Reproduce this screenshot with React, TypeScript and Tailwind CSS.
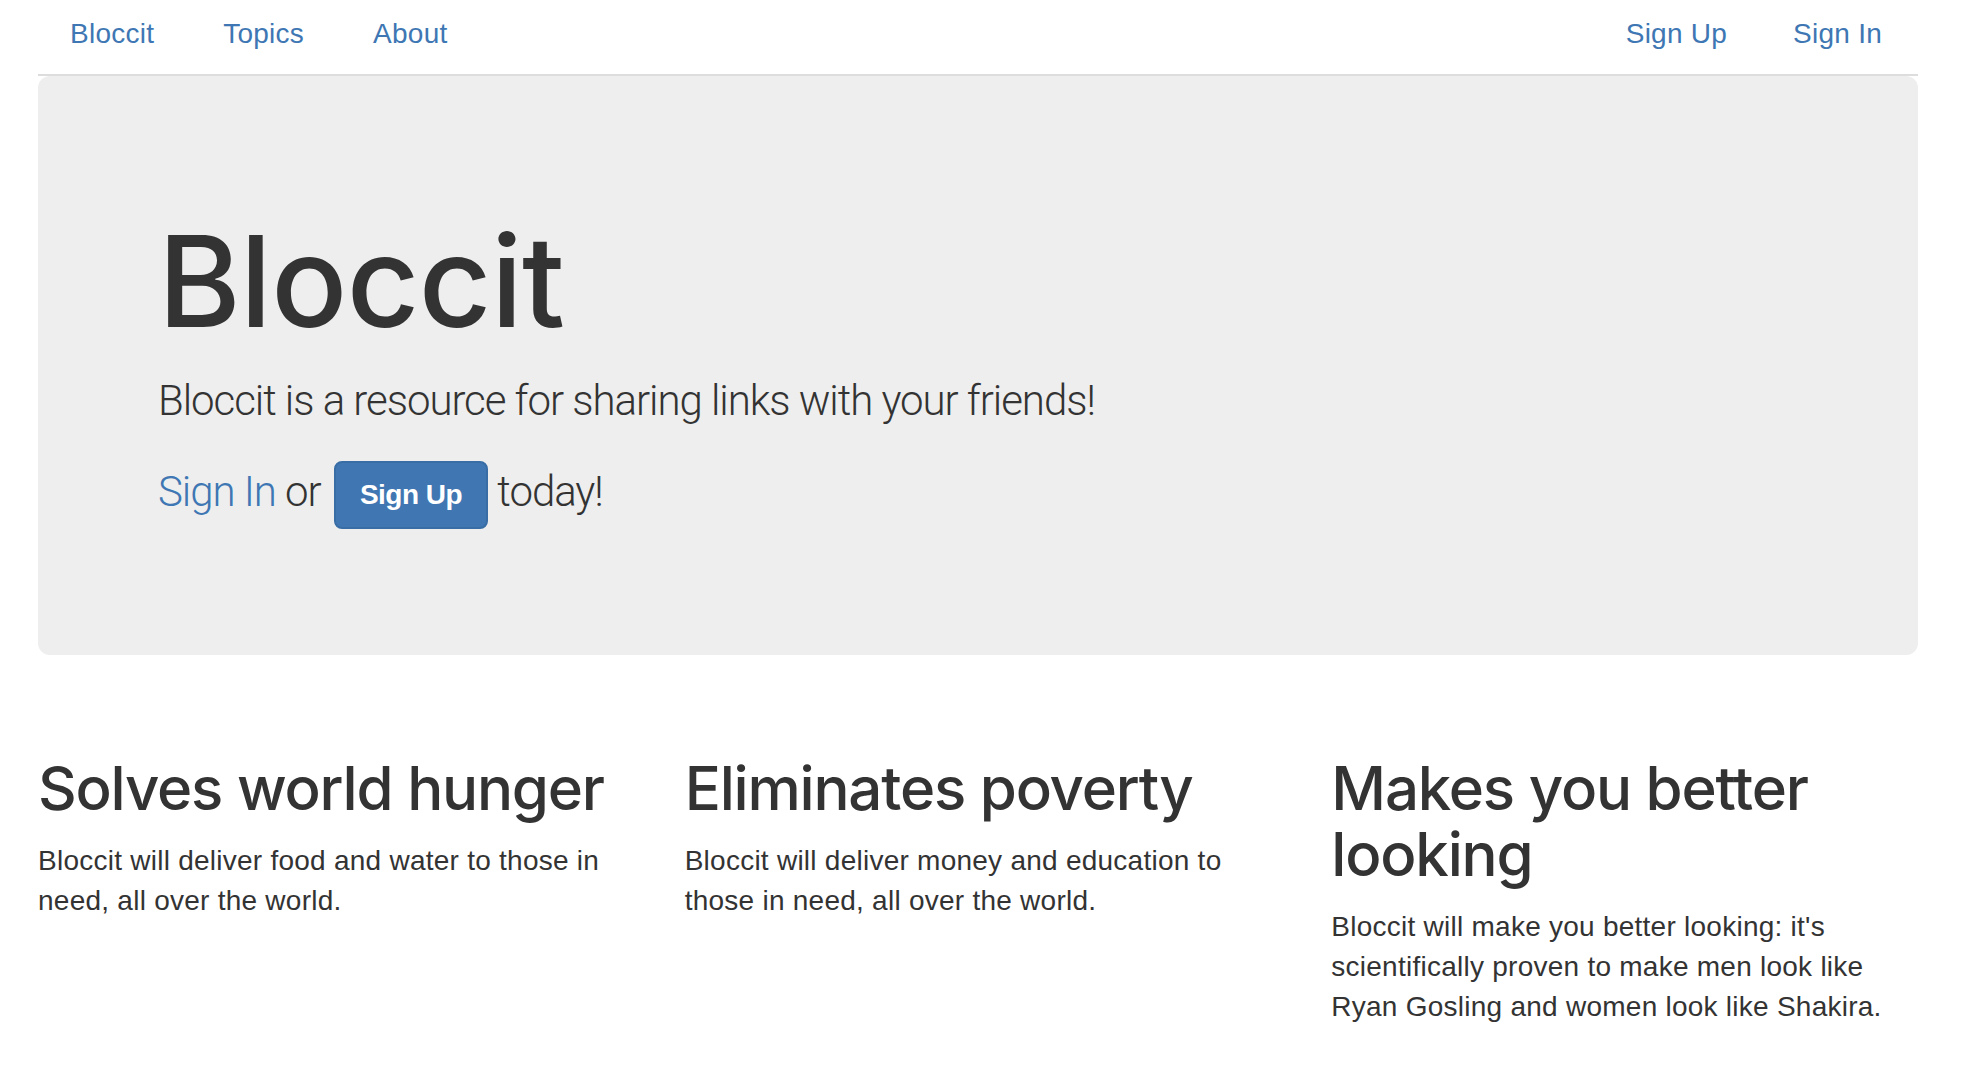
import React from 'react';

const leftLinks = ['Bloccit', 'Topics', 'About'];
const rightLinks = ['Sign Up', 'Sign In'];

const features = [
  {
    title: 'Solves world hunger',
    body: 'Bloccit will deliver food and water to those in need, all over the world.',
  },
  {
    title: 'Eliminates poverty',
    body: 'Bloccit will deliver money and education to those in need, all over the world.',
  },
  {
    title: 'Makes you better looking',
    body: "Bloccit will make you better looking: it's scientifically proven to make men look like Ryan Gosling and women look like Shakira.",
  },
];

export default function App() {
  return (
    <div className="min-h-screen bg-white font-['Liberation_Sans',Arial,sans-serif] tracking-[0.25px] text-[#333]">
      <div className="ml-[38px] w-[1880px]">
        {/* Top nav */}
        <nav className="flex h-[76px] justify-between border-b-2 border-[#ddd] pt-[14px] text-[28px] leading-[40px] text-[#3e77b3]">
          <ul className="flex gap-[9px] pl-[2px]">
            {leftLinks.map((l) => (
              <li key={l}>
                <a href="#" className="px-[30px]">
                  {l}
                </a>
              </li>
            ))}
          </ul>
          <ul className="flex gap-[6px] pr-[6px]">
            {rightLinks.map((l) => (
              <li key={l}>
                <a href="#" className="px-[30px]">
                  {l}
                </a>
              </li>
            ))}
          </ul>
        </nav>

        {/* Jumbotron */}
        <div className="rounded-[12px] bg-[#eee] px-[120px] pt-[96px] pb-[96px]">
          <h1 className="mt-[40px] mb-[20px] font-['Inter',sans-serif] text-[126px] leading-[1.1] font-medium tracking-[-0.005em]">
            Bloccit
          </h1>
          <p className="mb-[30px] font-['Roboto',sans-serif] text-[42px] leading-[60px] font-light tracking-[-0.025em]">
            Bloccit is a resource for sharing links with your friends!
          </p>
          <p className="mb-[30px] font-['Roboto',sans-serif] text-[42px] leading-[60px] font-light tracking-[-0.025em]">
            <a href="#" className="text-[#3e77b3]">
              Sign In
            </a>{' '}
            or{' '}
            <a
              href="#"
              className="ml-[4px] inline-block rounded-[8px] border-2 border-[#386da6] bg-[#4077b2] px-[24px] py-[12px] align-middle font-['Liberation_Sans',Arial,sans-serif] text-[28px] leading-[40px] font-bold tracking-[-0.5px] text-white"
            >
              Sign Up
            </a>{' '}
            today!
          </p>
        </div>

        {/* Features */}
        <div className="mt-[60px] grid grid-cols-3 gap-x-[60px]">
          {features.map((f) => (
            <div key={f.title}>
              <h2 className="mt-[40px] mb-[20px] font-['Inter',sans-serif] text-[60px] leading-[1.1] font-medium tracking-[-0.02em]">
                {f.title}
              </h2>
              <p className="mb-[20px] text-[28px] leading-[40px]">{f.body}</p>
            </div>
          ))}
        </div>
      </div>
    </div>
  );
}
